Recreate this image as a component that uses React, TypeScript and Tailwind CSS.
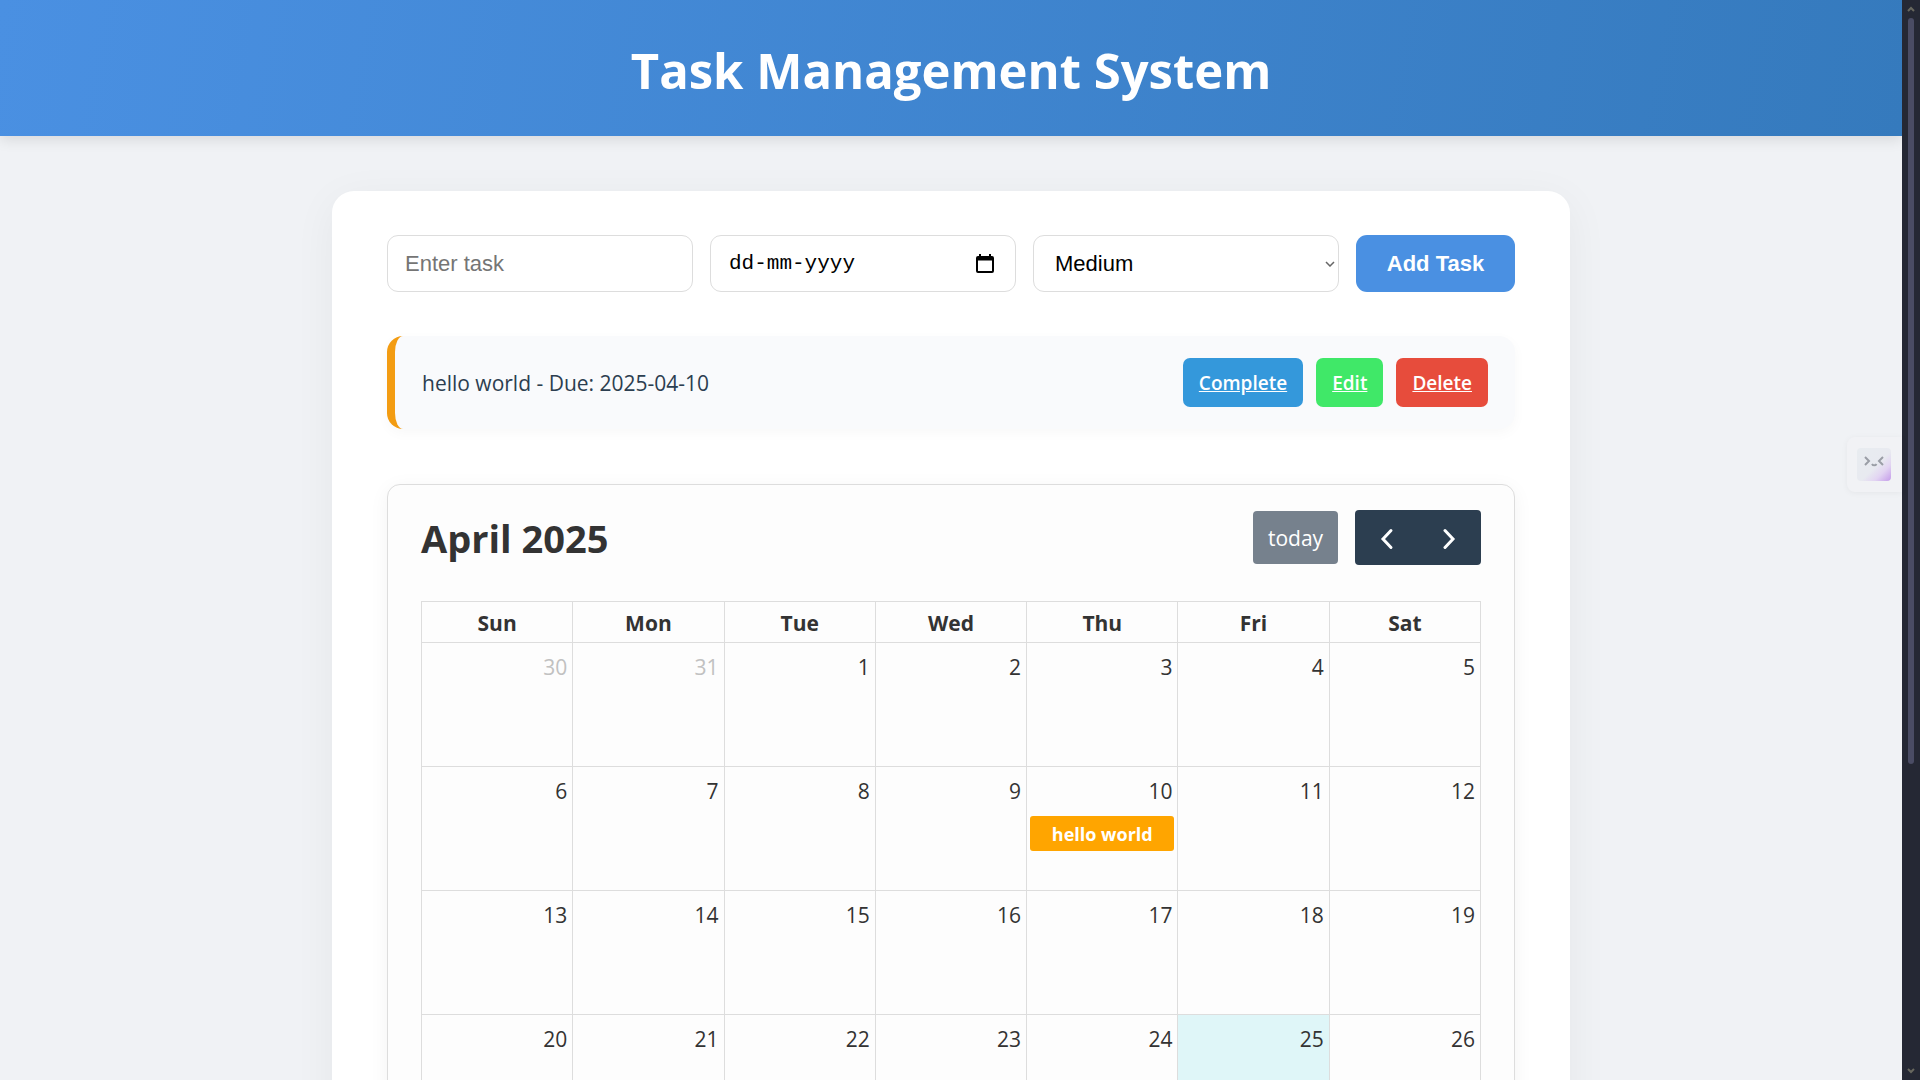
import { useState } from "react";

const DAYS = ["Sun", "Mon", "Tue", "Wed", "Thu", "Fri", "Sat"];

type Day = { date: Date; number: number; outside: boolean };

function buildWeeks(year: number, month: number): Day[][] {
  const offset = new Date(year, month, 1).getDay();
  return Array.from({ length: 6 }, (_, week) =>
    Array.from({ length: 7 }, (_, day) => {
      const date = new Date(year, month, 1 - offset + week * 7 + day);
      return { date, number: date.getDate(), outside: date.getMonth() !== month };
    }),
  );
}

function isDay(date: Date, year: number, month: number, day: number) {
  return date.getFullYear() === year && date.getMonth() === month && date.getDate() === day;
}

function CalendarIcon() {
  return (
    <svg width="18" height="20" viewBox="0 0 18 20" aria-hidden="true">
      <path
        fillRule="evenodd"
        fill="#000"
        d="M3 0h2v2h8V0h2v2h1a2 2 0 0 1 2 2v13a2 2 0 0 1-2 2H2a2 2 0 0 1-2-2V4a2 2 0 0 1 2-2h1zM2 6.500v10.500h14V6.500z"
      />
    </svg>
  );
}

function TaskForm() {
  return (
    <form className="flex gap-[17px]" onSubmit={(e) => e.preventDefault()}>
      <div className="min-w-0 flex-1">
        <input
          type="text"
          aria-label="Task"
          placeholder="Enter task"
          className="h-[57px] w-full rounded-[11px] border border-[#ddd] bg-white px-[17px] font-['Liberation_Sans',sans-serif] text-[22px] text-black outline-none placeholder:text-[#757575]"
        />
      </div>
      <div className="relative min-w-0 flex-1">
        <input
          type="text"
          aria-label="Due date"
          placeholder="dd-mm-yyyy"
          className="h-[57px] w-full rounded-[11px] border border-[#ddd] bg-white px-[18px] font-['Liberation_Mono',monospace] text-[21px] text-black outline-none placeholder:text-black"
        />
        <button type="button" aria-label="Open date picker" className="absolute inset-y-0 right-[22px] flex items-center">
          <CalendarIcon />
        </button>
      </div>
      <div className="relative min-w-0 flex-1">
        <select
          aria-label="Priority"
          defaultValue="Medium"
          className="h-[57px] w-full appearance-none rounded-[11px] border border-[#ddd] bg-white px-[21px] font-['Liberation_Sans',sans-serif] text-[22px] text-black outline-none"
        >
          <option>Low</option>
          <option>Medium</option>
          <option>High</option>
        </select>
        <svg
          className="pointer-events-none absolute inset-y-0 right-[4px] my-auto"
          width="10"
          height="6"
          viewBox="0 0 10 6"
          fill="none"
          stroke="#666"
          strokeWidth="1.500"
          aria-hidden="true"
        >
          <path d="M1 1l4 4 4-4" />
        </svg>
      </div>
      <button
        type="submit"
        className="h-[57px] w-[159px] rounded-[11px] bg-[#4a90e2] font-['Liberation_Sans',sans-serif] text-[22px] font-bold text-white"
      >
        Add Task
      </button>
    </form>
  );
}

function TaskItem() {
  const action = "flex h-[49px] items-center rounded-[7px] px-4 pt-[2px] text-[19px] font-semibold text-white underline";
  return (
    <div className="mt-11 flex h-[93px] items-center justify-between rounded-2xl border-l-8 border-[#f39c12] bg-[#f9fafc] px-[27px] shadow-[0_4px_13px_rgba(0,0,0,0.03)]">
      <span className="pt-[2px] text-[21px] text-[#2c3e50]">hello world - Due: 2025-04-10</span>
      <div className="flex gap-[13px]">
        <a href="#complete" className={`${action} bg-[#3498db]`}>
          Complete
        </a>
        <a href="#edit" className={`${action} bg-[#40e868]`}>
          Edit
        </a>
        <a href="#delete" className={`${action} bg-[#e74c3c]`}>
          Delete
        </a>
      </div>
    </div>
  );
}

function Calendar() {
  const [view, setView] = useState(new Date(2025, 3, 1));
  const weeks = buildWeeks(view.getFullYear(), view.getMonth());
  const title = view.toLocaleDateString("en-US", { month: "long", year: "numeric" });
  const shift = (by: number) => setView(new Date(view.getFullYear(), view.getMonth() + by, 1));

  return (
    <section className="mt-[55px] rounded-[13px] border border-[#ddd] bg-[#fdfdfd] px-[33px] pt-[25px] pb-[33px] text-[#333] shadow-[0_4px_20px_rgba(0,0,0,0.05)]">
      <div className="flex items-center justify-between">
        <h2 className="pt-[2px] text-[38px] leading-[53px] font-bold">{title}</h2>
        <div className="flex items-center gap-[17px]">
          <button
            type="button"
            className="flex h-[53px] w-[85px] items-center justify-center rounded-[4px] bg-[#76818d] pt-[2px] text-[21px] text-white"
          >
            today
          </button>
          <div className="flex h-[55px] w-[126px] overflow-hidden rounded-[4px] bg-[#2c3e50] text-white">
            <button
              type="button"
              aria-label="Previous month"
              onClick={() => shift(-1)}
              className="flex flex-1 items-center justify-center pt-[2px]"
            >
              <svg width="14" height="22" viewBox="0 0 14 22" fill="none" stroke="currentColor" strokeWidth="3" strokeLinecap="round" aria-hidden="true">
                <path d="M11 2.500L3 11l8 8.500" />
              </svg>
            </button>
            <button
              type="button"
              aria-label="Next month"
              onClick={() => shift(1)}
              className="flex flex-1 items-center justify-center pt-[2px]"
            >
              <svg width="14" height="22" viewBox="0 0 14 22" fill="none" stroke="currentColor" strokeWidth="3" strokeLinecap="round" aria-hidden="true">
                <path d="M2 2.500l8 8.500-8 8.500" />
              </svg>
            </button>
          </div>
        </div>
      </div>

      <table className="mt-9 w-full table-fixed border-collapse">
        <thead>
          <tr>
            {DAYS.map((day) => (
              <th key={day} className="h-[41px] border border-[#ddd] pt-[2px] text-[21px] leading-[30px] font-bold">
                {day}
              </th>
            ))}
          </tr>
        </thead>
        <tbody>
          {weeks.map((week) => (
            <tr key={week[0].date.toISOString()}>
              {week.map(({ date, number, outside }) => (
                <td
                  key={date.toISOString()}
                  className={`h-[124px] border border-[#ddd] align-top ${isDay(date, 2025, 3, 25) ? "bg-[#dff6f8]" : ""}`}
                >
                  <div className={`px-[5px] pt-[9px] text-right text-[21px] leading-[30px] ${outside ? "text-[#c1c1c1]" : ""}`}>
                    {number}
                  </div>
                  {isDay(date, 2025, 3, 10) && (
                    <div className="mx-[3px] mt-[10px] h-[35px] rounded-[3px] bg-[#ffa500] pt-px text-center text-[18px] leading-[35px] font-bold text-white">
                      hello world
                    </div>
                  )}
                </td>
              ))}
            </tr>
          ))}
        </tbody>
      </table>
    </section>
  );
}

function AssistantTab() {
  return (
    <button
      type="button"
      aria-label="Open assistant"
      className="absolute top-[437px] right-0 flex h-[55px] w-[55px] items-center rounded-l-[8px] bg-[#f1f2f5] pl-[10px] shadow-[0_1px_6px_rgba(0,0,0,0.05)]"
    >
      <span className="flex h-[33px] w-[34px] justify-center rounded-[4px] bg-[linear-gradient(135deg,#e8ecf0_0%,#e8eaf0_55%,#e2d4f2_75%,#c49bea_100%)] pt-[8px]">
        <svg width="20" height="12" viewBox="0 0 20 12" fill="none" stroke="#9a9ea6" strokeWidth="2" aria-hidden="true">
          <path d="M1 1l4 4-4 4M19 1l-4 4 4 4M8 8c1 1.800 3.500 1.800 4.500 0" />
        </svg>
      </span>
    </button>
  );
}

function ScrollTrack() {
  return (
    <div className="flex w-[18px] shrink-0 flex-col items-center bg-[#252834]" aria-hidden="true">
      <div className="flex h-[18px] items-center">
        <svg width="8" height="6" viewBox="0 0 8 6" fill="none" stroke="#68685f" strokeWidth="2">
          <path d="M1 5l3-3 3 3" />
        </svg>
      </div>
      <div className="w-full flex-1">
        <div className="mx-auto h-[71.500%] w-[6px] rounded-full bg-[#4a4c64]" />
      </div>
      <div className="flex h-[18px] items-center">
        <svg width="8" height="6" viewBox="0 0 8 6" fill="none" stroke="#68685f" strokeWidth="2">
          <path d="M1 1l3 3 3-3" />
        </svg>
      </div>
    </div>
  );
}

export default function App() {
  return (
    <div className="flex h-screen overflow-hidden bg-[#f0f2f5] font-['Open_Sans',sans-serif]">
      <div className="relative min-w-0 flex-1">
        <div className="h-full overflow-y-auto [scrollbar-width:none]">
          <header className="bg-[linear-gradient(100deg,#4a90e2,#357abd)] pt-[35px] pb-[31px] text-center shadow-[0_4px_13px_rgba(0,0,0,0.1)]">
            <h1 className="text-[49px] leading-[70px] font-bold text-white">Task Management System</h1>
          </header>
          <main className="mx-auto my-[55px] max-w-[1238px] rounded-[22px] bg-white px-[55px] pt-11 pb-[55px] shadow-[0_9px_44px_rgba(0,0,0,0.05)]">
            <TaskForm />
            <TaskItem />
            <Calendar />
          </main>
        </div>
        <AssistantTab />
      </div>
      <ScrollTrack />
    </div>
  );
}
